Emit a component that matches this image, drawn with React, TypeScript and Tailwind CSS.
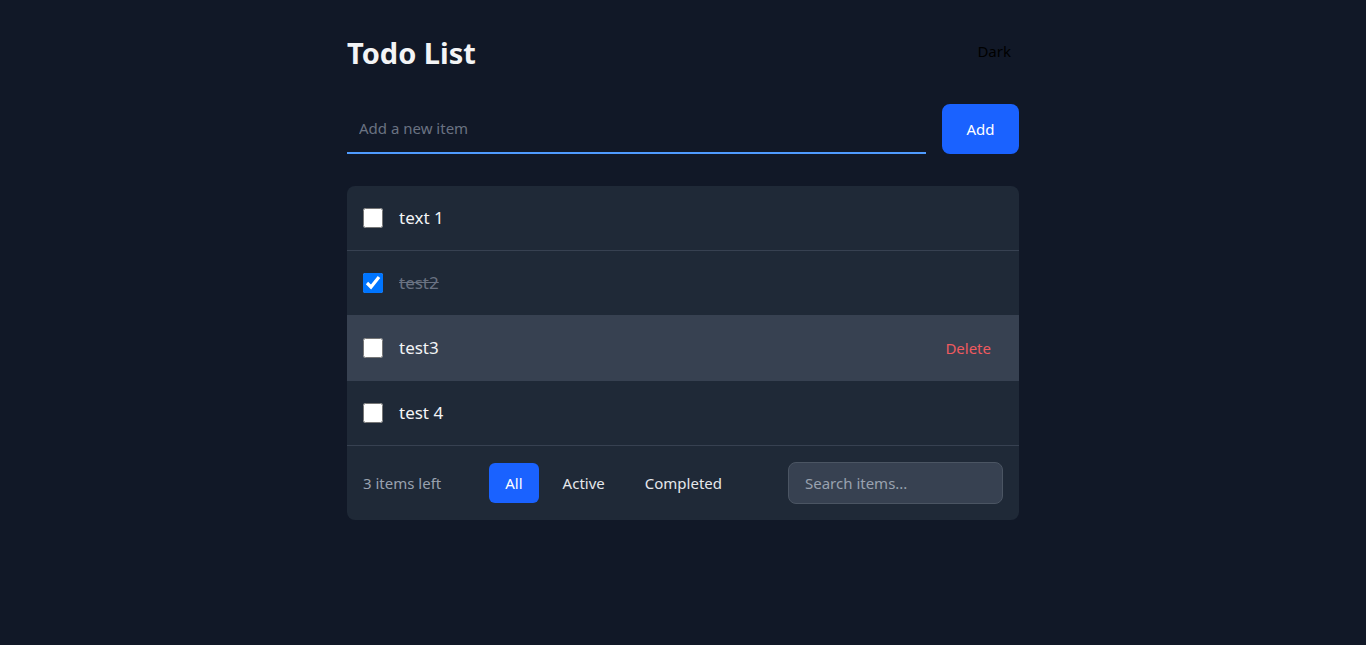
import { useState } from "react";

interface Todo {
  id: number;
  text: string;
  done: boolean;
}

const initialTodos: Todo[] = [
  { id: 1, text: "text 1", done: false },
  { id: 2, text: "test2", done: true },
  { id: 3, text: "test3", done: false },
  { id: 4, text: "test 4", done: false },
];

export default function App() {
  const [todos, setTodos] = useState<Todo[]>(initialTodos);
  const [filter, setFilter] = useState("All");
  const hovered = 3;

  const left = todos.filter((t) => !t.done).length;

  const toggle = (id: number) =>
    setTodos(todos.map((t) => (t.id === id ? { ...t, done: !t.done } : t)));

  return (
    <div
      className="min-h-screen bg-[#111827] text-white"
      style={{ fontFamily: '"Noto Sans", "Open Sans", sans-serif' }}
    >
      <div className="mx-auto max-w-2xl pt-[35px]">
        {/* Header */}
        <div className="mb-[33px] flex items-center justify-between">
          <h1 className="text-[29px] font-bold leading-9 text-gray-100">Todo List</h1>
          <button className="px-2 pb-[3px] text-[15px] text-black">Dark</button>
        </div>

        {/* New item */}
        <div className="flex gap-4">
          <input
            placeholder="Add a new item"
            className="flex-1 border-b-2 border-[#4f9bff] bg-transparent px-3 py-3 text-[15px] leading-6 text-white outline-none placeholder:text-gray-500"
          />
          <button className="h-[50px] w-[77px] rounded-lg bg-[#1a62ff] text-[15px] text-white">
            Add
          </button>
        </div>

        {/* List */}
        <div className="mt-8 overflow-hidden rounded-lg bg-[#1f2937]">
          {todos.map((todo) => (
            <div
              key={todo.id}
              className={`flex items-center border-b border-[#374151] px-4 py-[18px] ${
                todo.id === hovered ? "bg-[#374151]" : ""
              }`}
            >
              <input
                type="checkbox"
                checked={todo.done}
                onChange={() => toggle(todo.id)}
                className="m-0 h-5 w-5"
              />
              <span
                className={`ml-4 text-[17px] leading-7 ${
                  todo.done ? "text-gray-500 line-through" : "text-gray-100"
                }`}
              >
                {todo.text}
              </span>
              {todo.id === hovered && (
                <button className="ml-auto mr-3 text-[15px] text-[#ef5a5f]">Delete</button>
              )}
            </div>
          ))}

          {/* Footer */}
          <div className="flex items-center p-4">
            <span className="text-[15px] text-gray-400">{left} items left</span>
            <div className="ml-12 flex gap-2">
              {["All", "Active", "Completed"].map((f) => (
                <button
                  key={f}
                  onClick={() => setFilter(f)}
                  className={`rounded-md px-4 py-2 text-[15px] leading-6 ${
                    filter === f ? "bg-[#1a62ff] text-white" : "text-gray-200"
                  }`}
                >
                  {f}
                </button>
              ))}
            </div>
            <input
              placeholder="Search items..."
              className="ml-auto h-[42px] w-[215px] rounded-lg border border-[#4b5563] bg-[#374151] px-4 text-[15px] text-white outline-none placeholder:text-gray-400"
            />
          </div>
        </div>
      </div>
    </div>
  );
}
